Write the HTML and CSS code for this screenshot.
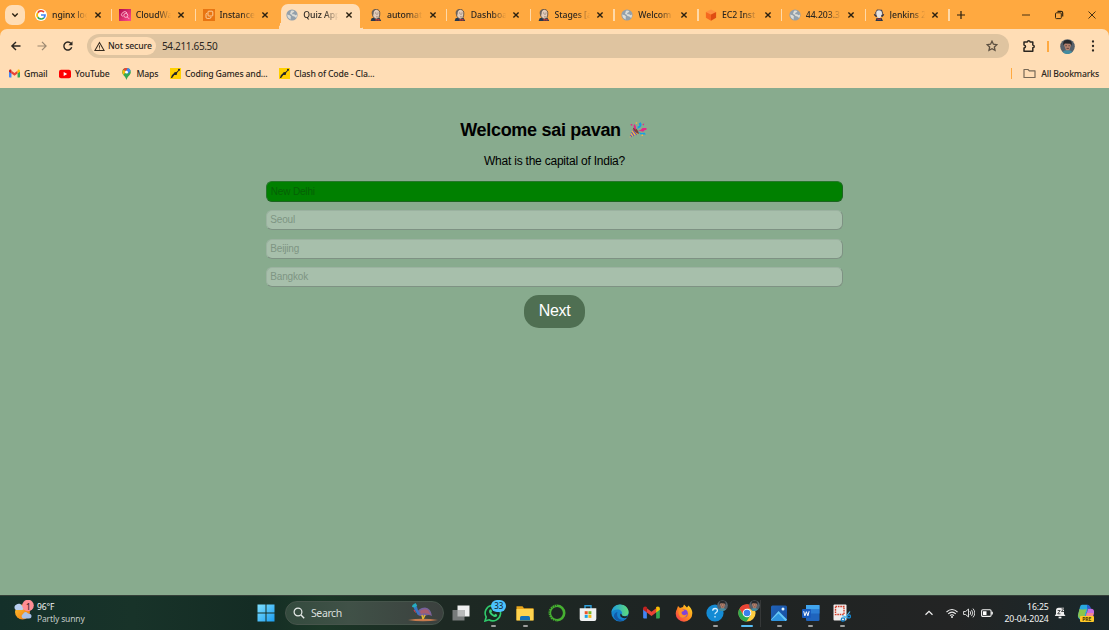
FILE: index.html
```html
<!DOCTYPE html>
<html lang="en">
<head>
<meta charset="utf-8">
<title>Quiz App</title>
<link rel="stylesheet" href="styles.css">
</head>
<body>
<svg class="defs" aria-hidden="true">
  <defs>
    <linearGradient id="gWin" x1="0" y1="0" x2="1" y2="1"><stop offset="0" stop-color="#7fe0ff"/><stop offset="1" stop-color="#1b9df0"/></linearGradient>
    <linearGradient id="gPink" x1="0" y1="0" x2="1" y2="1"><stop offset="0" stop-color="#b0084d"/><stop offset="1" stop-color="#ff4f8b"/></linearGradient>
    <linearGradient id="gEdge" x1="0" y1="0" x2="1" y2="0"><stop offset="0" stop-color="#1e9de0"/><stop offset="1" stop-color="#5fdc78"/></linearGradient>
    <linearGradient id="gSun" x1="0" y1="0" x2="1" y2="1"><stop offset="0" stop-color="#ffc22e"/><stop offset="1" stop-color="#ed7410"/></linearGradient>
    <linearGradient id="gPhoto" x1="0" y1="0" x2="1" y2="1"><stop offset="0" stop-color="#2062b8"/><stop offset="1" stop-color="#174f9f"/></linearGradient>
    <linearGradient id="gFox" x1="1" y1="0" x2="0" y2="1"><stop offset="0" stop-color="#ffe226"/><stop offset=".5" stop-color="#ff8a1c"/><stop offset="1" stop-color="#f5295c"/></linearGradient>
  </defs>
  <symbol id="x" viewBox="0 0 8 8"><path d="M1.400 1.400l5.200 5.200M6.600 1.400L1.400 6.600" stroke="#2a2010" stroke-width="1.400"/></symbol>
  <symbol id="google" viewBox="0 0 12 12"><circle cx="6" cy="6" r="6" fill="#fff"/><g fill="none" stroke-width="1.700"><path d="M2.800 3.700A4 4 0 0 1 9 3.200" stroke="#ea4335"/><path d="M2.800 8.300a4 4 0 0 1 0-4.600" stroke="#fbbc05"/><path d="M8.800 8.900a4 4 0 0 1-6-.6" stroke="#34a853"/><path d="M6 6h4a4 4 0 0 1-1.200 2.900" stroke="#4285f4"/></g></symbol>
  <symbol id="cloudwatch" viewBox="0 0 12 12"><path fill="url(#gPink)" d="M0 0h12v12H0z"/><g fill="none" stroke="#ffc0d6" stroke-width=".9"><path d="M4 7H3.200a1.500 1.500 0 0 1 .3-2.800A2.400 2.400 0 0 1 8 4.200"/><circle cx="6.800" cy="6.400" r="2"/><path d="M8.200 7.900l2 2"/></g></symbol>
  <symbol id="instance" viewBox="0 0 12 12"><path fill="#e87512" d="M0 0h12v12H0z"/><g fill="none" stroke="#ffd8a8" stroke-width=".9"><rect x="5" y="2.200" width="4.800" height="4.800" rx=".8"/><path d="M4.200 4.200q-1.200 0-1.200 1.200v2.800q0 1.200 1.200 1.200h2.500Q8 9.400 8 8"/></g></symbol>
  <symbol id="globe" viewBox="0 0 12 12"><circle cx="6" cy="6" r="5.600" fill="#93a0ab"/><path d="M5 1.800q2-.8 3.400.4L7.300 3.600 6.100 4l.3 1.200 1.700.1 1.500 1L11 5.500q.2 2-.9 3.600L8.400 7.600 6.500 7 5.400 5.500 4 5zM1.200 5.600l2.500.7 1.400 1.400-.6 1.200.5 1.700Q1.300 9.500 1.200 5.600z" fill="#dcdcd6"/></symbol>
  <symbol id="jenkins" viewBox="0 0 12 12"><path d="M.6 12l1-2.800 3-.8 5 .5 1.600 3.100z" fill="#26394d"/><path d="M2.200 4C2 1.500 4 .3 6.500.4 9 .6 10 2.500 9.800 5c-.1 2.800-1 5-3.200 5C4.500 10 3 8.200 2.500 6z" fill="#e2ccba" stroke="#4d443d" stroke-width=".8"/><path d="M2 4.800C1.500 1.500 4 .1 6.500.3 4 1.500 3.600 3 3.600 5L3 6.400z" fill="#6b625b"/><path d="M5 4h1.200M7.500 4h1.100M6 7.600c1 .6 1.800.4 2.300-.1M7 4.500v1.500" stroke="#6b584d" stroke-width=".6" fill="none"/><path d="M5.500 9.800l2 .8 2-.8v2l-2-.6-2 .6z" fill="#d33833"/></symbol>
  <symbol id="jenkinsw" viewBox="0 0 12 12"><path d="M2.500 12l1-3 5 .1L10 12z" fill="#27384c"/><path d="M2 4L4 .6 9 .7 10 4 8.500 7H4z" fill="#445"/><path d="M3.200 4c0-2 1-2.800 2.800-2.800S9 2.300 9 4.200 8 9 6 9 3.200 6.500 3.200 4z" fill="#e3e2e2"/><path d="M1.300 5.300l2.400 2.400M10.700 5.300L8.500 7.600" stroke="#334" stroke-width="1.600"/><path d="M4.500 8.900l1.500 1 1.700-1v2.400L6 10.500l-1.500.8z" fill="#c53932"/></symbol>
  <symbol id="cube" viewBox="0 0 12 12"><path d="M6 .5L11 3 6 5.400 1 3z" fill="#ff9142"/><path d="M.9 3L6 5.400v6.300L.9 8.800z" fill="#f56920"/><path d="M11.100 3L6 5.400v6.300l5.100-2.900z" fill="#df4c12"/></symbol>
  <symbol id="gmail" viewBox="0 0 18 14"><path d="M0 2.500V12.500q0 1 1 1H4V6z" fill="#4285f4"/><path d="M18 2.500V12.500q0 1-1 1H14V6z" fill="#34a853"/><path d="M4 2.500l5 3.800 5-3.800V7L9 10.800 4 7z" fill="#ea4335"/><path d="M0 3C0 .5 2.300-.1 4 1.200V7L0 4z" fill="#c5221f"/><path d="M18 3c0-2.500-2.300-3.100-4-1.800V7l4-3z" fill="#fbbc04"/></symbol>
  <symbol id="game" viewBox="0 0 12 12"><path d="M0 0h12v12H0z" fill="#ffd000"/><path d="M1 10.800L2 7.800 4 6l1-1.400 2-.2L10 1.700l.7.600L8 5 7.200 7.500 4.700 7.600 2.300 11z" fill="#242626"/><circle cx="9.800" cy="1.800" r="1.100" fill="#242626"/></symbol>
  <symbol id="face" viewBox="0 0 16 16"><circle cx="8" cy="8" r="7.800" fill="#56606a"/><path d="M3 14c1-3 9-3 10 .2A8 8 0 0 1 3 14z" fill="#438ca0"/><path d="M4.500 7Q3.500 2 8 1.600 12.500 2 11.600 7L10 12H6.400z" fill="#b6826e"/><path d="M3.700 7C2.700 1.800 5 1 8.300 1c3.800 0 5 2.500 4 6.200L10.900 5 5.200 4.700z" fill="#26272a"/><path d="M5.700 7.200h1.700M9 7.200h1.500M7 10h2.500" stroke="#41312c" stroke-width=".8"/></symbol>
</svg>

<header class="browser">
  <div class="tabstrip">
    <div class="tabsearch"><svg viewBox="0 0 8 8"><path d="M1.300 2.600L4 5.300l2.700-2.700" fill="none" stroke="#2a2010" stroke-width="1.400"/></svg></div>
    <div class="tab"><svg class="fav"><use href="#google"/></svg><span class="label">nginx log</span><svg class="close"><use href="#x"/></svg></div>
    <div class="tab"><svg class="fav"><use href="#cloudwatch"/></svg><span class="label">CloudWa</span><svg class="close"><use href="#x"/></svg></div>
    <div class="tab nosep"><svg class="fav"><use href="#instance"/></svg><span class="label">Instance</span><svg class="close"><use href="#x"/></svg></div>
    <div class="tab active"><svg class="fav"><use href="#globe"/></svg><span class="label">Quiz App</span><svg class="close"><use href="#x"/></svg></div>
    <div class="tab"><svg class="fav"><use href="#jenkins"/></svg><span class="label">automat</span><svg class="close"><use href="#x"/></svg></div>
    <div class="tab"><svg class="fav"><use href="#jenkins"/></svg><span class="label">Dashboa</span><svg class="close"><use href="#x"/></svg></div>
    <div class="tab"><svg class="fav"><use href="#jenkins"/></svg><span class="label">Stages [a</span><svg class="close"><use href="#x"/></svg></div>
    <div class="tab"><svg class="fav"><use href="#globe"/></svg><span class="label">Welcom</span><svg class="close"><use href="#x"/></svg></div>
    <div class="tab"><svg class="fav"><use href="#cube"/></svg><span class="label">EC2 Inst</span><svg class="close"><use href="#x"/></svg></div>
    <div class="tab"><svg class="fav"><use href="#globe"/></svg><span class="label">44.203.3</span><svg class="close"><use href="#x"/></svg></div>
    <div class="tab"><svg class="fav"><use href="#jenkinsw"/></svg><span class="label">Jenkins 2</span><svg class="close"><use href="#x"/></svg></div>
    <svg class="plus" viewBox="0 0 10 10"><path d="M5 1v8M1 5h8" stroke="#2a2010" stroke-width="1.200"/></svg>
    <div class="winctl">
      <svg viewBox="0 0 10 10"><path d="M1 5h8" stroke="#33250f" stroke-width=".9"/></svg>
      <svg viewBox="0 0 10 10"><g fill="none" stroke="#33250f"><rect x="1.500" y="2.800" width="5.800" height="5.800" rx="1"/><path d="M3.500 1.400h3.600q1.600 0 1.600 1.600v3.600" stroke-width="1.200"/></g></svg>
      <svg viewBox="0 0 10 10"><path d="M1.500 1.500l7 7M8.500 1.500l-7 7" stroke="#33250f" stroke-width=".9"/></svg>
    </div>
  </div>

  <div class="toolbar">
    <svg class="nav" viewBox="0 0 12 12"><path d="M10.500 6H2M6 1.900L1.900 6 6 10.100" fill="none" stroke="#2b2620" stroke-width="1.400"/></svg>
    <svg class="nav" viewBox="0 0 12 12"><path d="M1.500 6H10M6 1.900L10.100 6 6 10.100" fill="none" stroke="#9b8870" stroke-width="1.200"/></svg>
    <svg class="nav" viewBox="0 0 12 12"><path d="M9.700 7.300A4 4 0 1 1 9 3.500" fill="none" stroke="#2b2620" stroke-width="1.400"/><path d="M10.500 1.300v4h-4z" fill="#2b2620"/></svg>
    <div class="omnibox">
      <span class="secure"><svg viewBox="0 0 12 12"><path d="M6 1.700L11 10.300H1z" fill="none" stroke="#33291e" stroke-width="1.100"/><path d="M6 4.800v2.600M6 8.200v1" stroke="#33291e"/></svg><span>Not secure</span></span>
      <span class="url">54.211.65.50</span>
      <svg class="star" viewBox="0 0 12 12"><path d="M6 1.200l1.450 3.050 3.350.4-2.450 2.300.65 3.300L6 8.650l-3 1.600.65-3.300L1.200 4.650l3.350-.4z" fill="none" stroke="#5d5041" stroke-width="1.300"/></svg>
    </div>
    <svg class="puzzle" viewBox="0 0 14 14"><path d="M2 3h3.300q.2-1.200 1.400-1.200T8.100 3h2.700v3q1.400.2 1.400 1.400t-1.400 1.400v3.400H2V9.100Q3.500 8.800 3.500 7.500T2 6z" fill="none" stroke="#2b2620" stroke-width="1.500" stroke-linejoin="round"/></svg>
    <span class="vbar"></span>
    <svg class="avatar"><use href="#face"/></svg>
    <svg class="dots" viewBox="0 0 4 12"><g fill="#2b2620"><circle cx="2" cy="1.500" r="1.150"/><circle cx="2" cy="6" r="1.150"/><circle cx="2" cy="10.500" r="1.150"/></g></svg>
  </div>

  <nav class="bookmarks">
    <a class="bm gm"><svg><use href="#gmail"/></svg><span>Gmail</span></a>
    <a class="bm yt"><svg viewBox="0 0 12 10"><rect y=".7" width="12" height="8.600" rx="2" fill="#f00"/><path d="M4.700 3v4l3.500-2z" fill="#fff"/></svg><span>YouTube</span></a>
    <a class="bm mp"><svg viewBox="0 0 9 12"><path d="M4.500 0A4.300 4.300 0 0 0 .2 4.200C.2 7 3.500 8 4.500 12c1-4 4.300-5 4.300-7.800A4.300 4.300 0 0 0 4.500 0z" fill="#34a853"/><path d="M.9 2A4.300 4.300 0 0 1 5.800.1L4 3z" fill="#ea4335"/><path d="M5.800.1a4.300 4.300 0 0 1 2.800 2.700L5.800 6 4 3z" fill="#4285f4"/><path d="M.9 2L4 3 1.600 7A5 5 0 0 1 .9 2z" fill="#fbbc04"/><circle cx="4.500" cy="4.200" r="1.400" fill="#fff"/></svg><span>Maps</span></a>
    <a class="bm cg"><svg><use href="#game"/></svg><span>Coding Games and...</span></a>
    <a class="bm cc"><svg><use href="#game"/></svg><span>Clash of Code - Cla...</span></a>
    <span class="vbar end"></span>
    <a class="bm all"><svg viewBox="0 0 13 11"><path d="M1 1.500h4l1.300 1.300H12v6.700H1z" fill="none" stroke="#776957" stroke-width="1.200" stroke-linejoin="round"/></svg><span>All Bookmarks</span></a>
  </nav>
</header>

<main class="quiz">
  <h1><span>Welcome sai pavan</span>
    <svg viewBox="0 0 18 16"><path d="M.5 15.500L4 6.500l6 5z" fill="#f4b942"/><path d="M2.500 10l2.500 4M3.600 7.500l4 5.300M1.400 12.800l1.300 2" stroke="#6257ba" stroke-width="1.200"/><path d="M4 6q2-1 4 1.500t2 4.500Q8 12 5.800 9.600T4 6z" fill="#7a4038"/><path d="M6.500 8Q3.500 5 5.300 2q2.200 2 1.700 4.500z" fill="#e52886"/><path d="M8 7q1-1 .7-3 2.600 1 1-2.500l2-1.200q2 3-.6 5.200z" fill="#159fe4"/><path d="M9 8.400q3.500 0 4.500-2.400l4 .1v1.600q-3 .6-3.300 2z" fill="#e52886"/><path d="M8.800 9.500l3.300 1.500 3.700-.3 1 1.700h-5z" fill="#159fe4"/><path d="M1.700 2h1.600v1.600H1.700z" fill="#e52886"/><path d="M6.700.2h1.500v1.500H6.700zM12.500 12.400H14v1.500h-1.500z" fill="#f4b942"/><path d="M13.200 2.200l2-.8-.4 2z" fill="#e52886"/></svg>
  </h1>
  <p class="question">What is the capital of India?</p>
  <div class="option correct">New Delhi</div>
  <div class="option">Seoul</div>
  <div class="option">Beijing</div>
  <div class="option">Bangkok</div>
  <div class="next">Next</div>
</main>

<footer class="taskbar">
  <div class="weather">
    <svg viewBox="0 0 22 22"><circle cx="9.500" cy="12" r="7.500" fill="url(#gSun)"/><path d="M3 10a3 3 0 0 1 .5-5.500A3.500 3.500 0 0 1 9 6q2 0 2 2t-2 2z" fill="#b9d0f1"/><path d="M10 18.500a2.500 2.500 0 0 1 0-4.500q2-3.500 5-.5 3.500 0 3.500 2.500t-2.500 2.500z" fill="#a9c1e9"/><circle cx="15" cy="5.500" r="5.800" fill="#ff8d95"/></svg>
    <b>1</b>
    <div><span>96°F</span><span class="dim">Partly sunny</span></div>
  </div>
  <svg class="start" viewBox="0 0 18 18"><path d="M.5.500h8v8h-8zM9.500.500h8v8h-8zM.5 9.500h8v8h-8zM9.500 9.500h8v8h-8z" fill="url(#gWin)"/></svg>
  <div class="search">
    <svg class="mag" viewBox="0 0 12 12"><circle cx="5" cy="5" r="3.900" fill="none" stroke="#e7ebe9" stroke-width="1.200"/><path d="M8 8l3.200 3.200" stroke="#e7ebe9" stroke-width="1.400"/></svg>
    <span>Search</span>
    <svg class="bird" viewBox="0 0 30 19"><path d="M0 17Q14 14.500 30 17q-15 2.500-30 0z" fill="#c67b4e"/><path d="M9 10q1-5 8-5.500Q23 5 24 13q-4-2-7 0-7 1-8-3z" fill="#75619b"/><path d="M12 8q4-3 8-1l3 5q-5-3-10-1z" fill="#a65d70"/><path d="M5 3q3-2 4 1 1 5 3 7l-2 1Q6 7 5 3z" fill="#3976c5"/><path d="M4.500 2l3-2 1.700 2.500-2 2L4 4z" fill="#25adc2"/><path d="M6 7l1.500 2.500" stroke="#e33b50"/><path d="M14 12l1 4M17 12l-2 4" stroke="#e1b532" stroke-width="1.500"/></svg>
  </div>
  <div class="apps">
    <div class="app"><svg viewBox="0 0 18 18"><path d="M5.500 1.500h12v11h-12z" fill="#f0f1f1"/><path d="M.5 6h12v10.500H.5z" fill="#777b7b"/><path d="M5.500 6h7v6.500h-7z" fill="#b8baba"/></svg></div>
    <div class="app run"><svg viewBox="0 0 18 18"><path d="M1 17l1.200-4A7.700 7.700 0 1 1 5 15.800z" fill="#182a21" stroke="#30c96b" stroke-width="1.600"/><path d="M5.700 5.400l1.500-.2.900 2-.8 1.100q1 1.800 2.900 2.600l1-1.100 2 .9-.2 1.600q-1.300 1.300-3.200.5-3-1-4.500-4-.7-2.100.4-3.400z" fill="#36d176"/></svg><b class="count">33</b></div>
    <div class="app run"><svg viewBox="0 0 18 18"><path d="M.5 2.300h6l1.500 2h9.500v12H.5z" fill="#e8a51b"/><path d="M.5 5h17v11.500H.5z" fill="#ffd34e"/><path d="M4 16.500v-3q0-1.500 1.500-1.500h7q1.500 0 1.500 1.500v3z" fill="#1570b7"/></svg></div>
    <div class="app"><svg viewBox="0 0 18 18"><circle cx="9" cy="9" r="7.200" fill="none" stroke="#46b031" stroke-width="2.600"/><path d="M9 1.200A7.800 7.800 0 0 0 9 16.800" fill="none" stroke="#1d2b20" stroke-width="1.200" stroke-dasharray=".8 1.600"/></svg></div>
    <div class="app"><svg viewBox="0 0 18 18"><path d="M6 5V1.700h6V5" fill="none" stroke="#2f9fdb" stroke-width="1.400"/><path d="M.7 4.300h16.600V15q0 2-2 2H2.700q-2 0-2-2z" fill="#f0f2f2"/><path d="M5.700 7.200h3v3h-3z" fill="#ef5427"/><path d="M9.400 7.200h3v3h-3z" fill="#78b624"/><path d="M5.700 10.900h3v3h-3z" fill="#18a5e6"/><path d="M9.400 10.900h3v3h-3z" fill="#f6b519"/></svg></div>
    <div class="app"><svg viewBox="0 0 18 18"><circle cx="9" cy="9" r="8.600" fill="#1583cf"/><path d="M.5 8.500C1 3.500 4.500.4 9 .4c5 0 8.600 3.500 8.600 7.600 0 3-2.600 4.300-4.700 4.300-2.400 0-2.900-.8-2.100-2 1-2-.7-4.800-4.200-4.800-3 0-5 1.300-6.100 3z" fill="url(#gEdge)"/><path d="M6.500 8c-1.800 5 2 9 8 7.300C9 19 3.500 16 3 12.500 2.800 10.500 4 8.500 6.500 8z" fill="#135aa9"/><path d="M10.700 10.500q.2 1.700 2.600 1.800 2 0 3.500-.9l-.6 2.200Q12 15 9.700 12.700 8.700 11 9.500 9.500z" fill="#1c2528"/></svg></div>
    <div class="app"><svg class="gmicon"><use href="#gmail"/></svg></div>
    <div class="app"><svg viewBox="0 0 18 18"><path d="M2 5l1-3 2 2 3-1 1-2.500 3 3 1.500-2q4 4 3.800 8A8.300 8.300 0 0 1 .7 9.500Q.700 7 2 5z" fill="url(#gFox)"/><circle cx="8.800" cy="9.500" r="4" fill="#8144d6"/><path d="M3.500 5.500q4-1.300 6 1.300l-2.700 1Q6 10 8.500 11q2 .5 3.500-1-1 4-4.500 3.800Q2.800 13 3.500 5.500z" fill="#ff8f25"/></svg></div>
    <div class="app run"><svg viewBox="0 0 18 18"><circle cx="9" cy="9" r="8.600" fill="#148bd4"/><path d="M6.700 6.800q0-2.300 2.400-2.300t2.300 2.100q0 1.200-1.200 1.900T9 10.300M9 12v1.500" fill="none" stroke="#d3efff" stroke-width="1.300"/></svg><svg class="mini"><use href="#face"/></svg></div>
    <div class="app run current"><svg viewBox="0 0 18 18"><circle cx="9" cy="9" r="8.600" fill="#ffcd40"/><path d="M1.500 4.700A8.600 8.600 0 0 1 16.500 4.700H9L5.500 11.300z" fill="#ea4335"/><path d="M1.500 4.700A8.600 8.600 0 0 0 8.500 17.600L12.700 11l-7.300.2z" fill="#2eaa51"/><circle cx="9" cy="9" r="4.300" fill="#fff"/><circle cx="9" cy="9" r="3.300" fill="#3980ed"/></svg><svg class="mini"><use href="#face"/></svg></div>
    <div class="app run"><svg viewBox="0 0 18 18"><rect x="1" y="1.500" width="16" height="15.500" rx="1.500" fill="url(#gPhoto)"/><path d="M1 15.500L8.500 7 17 15.500 16 17H2z" fill="#66c8f5"/><path d="M1.500 16L8.500 9.500 15.500 17H2z" fill="#2e94df"/><circle cx="13" cy="5" r="1.500" fill="#e6f8ff"/></svg></div>
    <div class="app run"><svg viewBox="0 0 18 18"><rect x="4" y="1" width="13.500" height="16" rx="1.300" fill="#1f64bd"/><path d="M4 1h13.500v4.500H4z" fill="#41a5ee"/><path d="M4 5.500h13.500v4H4z" fill="#2b7cd3"/><rect x="0" y="5" width="9" height="9" rx="1" fill="#185abd"/><path d="M1.700 7.200l1.200 4.600 1.500-4.100 1.500 4.100 1.200-4.600" fill="none" stroke="#fff" stroke-width="1"/></svg></div>
    <div class="app run"><svg viewBox="0 0 18 18"><rect x=".5" y=".5" width="13" height="16" rx="1" fill="#f1eded"/><rect x="2.500" y="2.500" width="8.500" height="8" fill="none" stroke="#d23d28" stroke-width="1.400" stroke-dasharray="1.600 .8"/><path d="M9 11.500l6 2.500M17 7.500L11 15" stroke="#51b9ee" stroke-width="1.200"/><circle cx="10" cy="15.500" r="1.700" fill="none" stroke="#1784cd" stroke-width="1.300"/><circle cx="16" cy="12.500" r="1.500" fill="none" stroke="#1784cd" stroke-width="1.300"/></svg></div>
  </div>
  <svg class="chev" viewBox="0 0 10 10"><path d="M1.500 6.700L5 3.300l3.500 3.400" fill="none" stroke="#f1f1f1" stroke-width="1.200"/></svg>
  <div class="tray">
    <svg viewBox="0 0 12 12"><g fill="none" stroke="#eee" stroke-width="1.100"><path d="M.5 5q5.500-5 11 0M2.200 6.900q3.800-3.500 7.600 0M4 8.700q2-1.900 4 0"/></g><circle cx="6" cy="10" r="1" fill="#eee"/></svg>
    <svg viewBox="0 0 12 12"><g fill="none" stroke="#eee" stroke-width=".9"><path d="M.6 4.500h2L5.500 2v8L2.600 7.500h-2zM7 4.200q1.500 1.800 0 3.600M8.500 2.900q2.700 3.100 0 6.200M10 1.600q3.700 4.400 0 8.800"/></g></svg>
    <svg viewBox="0 0 12 12"><rect x=".6" y="2.800" width="9.500" height="6.600" rx="1.200" fill="none" stroke="#f3f3f3" stroke-width="1.100"/><path d="M2 4.200h3.500v3.900H2zM10.400 4.800h1.400v2.600h-1.400z" fill="#fff"/></svg>
  </div>
  <div class="clock"><span>16:25</span><span>20-04-2024</span></div>
  <svg class="bell" viewBox="0 0 12 12"><path d="M2 3.500Q2 .8 4.500.8H10V7l1.500 2H.8L2 7z" fill="#eee"/><path d="M4.600 10.500h2.800" stroke="#eee" stroke-width="1.700"/><path d="M3.700 3.500h2.500L3.700 6.800h2.700M7.500 1.800h2.300L7.500 4.500H10" fill="none" stroke="#252727" stroke-width=".8"/></svg>
  <div class="copilot"><svg viewBox="0 0 18 18"><path d="M5 .8h5q2 0 1.500 2L8.500 13q-.8 3-3.500 3-3.500 0-4.200-4L3 3Q3.500.8 5 .8z" fill="#29a9df"/><path d="M1 11l1.500-6q3 1 7 0l-2 7q-1 3.500-3.500 3Q1 14.500 1 11z" fill="#8cc44c"/><path d="M10 .8q3 0 4 4h-4z" fill="#285fd0"/><path d="M11 4.800h3q3.500 0 3 4L15.500 15H8z" fill="#c56de1"/><path d="M9.800 9h6.900l-1.500 6H8z" fill="#f48791"/></svg><b>PRE</b></div>
</footer>
</body>
</html>
```
FILE: styles.css
```css
* { box-sizing: border-box; }
body {
  margin: 0;
  width: 1109px;
  height: 630px;
  display: flex;
  flex-direction: column;
  overflow: hidden;
  background: #88ab8e;
  font-family: "Noto Sans", sans-serif;
  font-size: 8.7px;
  color: #2b2620;
}
svg { display: block; flex: none; }
.defs { position: absolute; width: 0; height: 0; }
.browser { height: 88px; flex: none; background: #ffa940; font-weight: 500; }

.tabstrip { height: 29px; display: flex; align-items: center; }
.tabsearch {
  width: 20px; height: 20px; margin: 0 2.500px 0 5px; flex: none;
  border-radius: 7px; background: #ffddb5;
  display: flex; align-items: center; justify-content: center;
}
.tabsearch svg { width: 8px; height: 8px; }
.tab {
  position: relative; width: 83.750px; height: 25px; flex: none; align-self: flex-end;
  display: flex; align-items: center; padding: 0 0 4px 7.500px;
}
.tab::after {
  content: ""; position: absolute; right: -1px; top: 5px;
  width: 1.500px; height: 12px; background: #ffd9a8;
}
.tab.nosep::after, .tab.active::after { display: none; }
.fav { width: 12px; height: 12px; }
.label {
  width: 38px; margin-left: 5px; margin-top: 1px; white-space: nowrap; letter-spacing: -.05px;
  -webkit-mask-image: linear-gradient(90deg, #000 55%, transparent 93%);
  mask-image: linear-gradient(90deg, #000 55%, transparent 93%);
}
.close { width: 8px; height: 8px; margin: 0 0 0 3.500px; }
.tab.active::before {
  content: ""; position: absolute; z-index: 0; left: 2.500px; right: 2.500px; top: 0; bottom: 0;
  border-radius: 7px 7px 0 0; background: #ffddb5;
}
.tab.active > * { position: relative; z-index: 1; }
.tab.active {
  background:
    radial-gradient(circle at 0 0, transparent 5px, #ffddb5 5.500px) right -3px bottom 0 / 6px 6px no-repeat,
    radial-gradient(circle at 0 0, transparent 5px, #ffddb5 5.500px) left -4px bottom 0 / 6px 6px no-repeat;
}
.plus { width: 10px; height: 10px; margin-left: 7px; }
.winctl { display: flex; gap: 23px; margin-left: auto; margin-right: 12px; }
.winctl svg { width: 10px; height: 10px; }

.toolbar {
  height: 34px; display: flex; align-items: center;
  background: #ffddb5; border-radius: 7px 7px 0 0;
}
.nav { width: 12px; height: 12px; margin-left: 14px; }
.nav:first-child { margin-left: 10px; }
.omnibox {
  width: 922px; height: 24px; margin-left: 13px; border-radius: 12px;
  background: #dfc4a0; display: flex; align-items: center; padding-left: 4px;
}
.secure {
  height: 18px; width: 65px; border-radius: 9px; background: #ffddb5;
  display: flex; align-items: center; gap: 3px; padding-left: 3px; white-space: nowrap;
}
.secure svg { width: 11px; height: 11px; }
.secure span { letter-spacing: -.12px; }
.url { margin-left: 6px; font-size: 10px; letter-spacing: -.35px; font-weight: 400; }
.star { width: 12px; height: 12px; margin-left: auto; margin-right: 11px; }
.puzzle { width: 14px; height: 14px; margin-left: 13px; }
.vbar { width: 1.500px; height: 11px; margin-left: 11px; background: #ffa940; }
.avatar { width: 15px; height: 15px; margin-left: 11px; }
.dots { width: 4px; height: 12px; margin-left: 16px; }

.bookmarks {
  height: 25px; background: #ffddb5; display: flex; align-items: center;
  padding: 0 10px 4px 9px;
}
.bm { display: flex; align-items: center; white-space: nowrap; }
.bm span { letter-spacing: -.16px; }
.gm { width: 50px; gap: 4px; } .gm svg { width: 11px; height: 9px; }
.yt { width: 63px; gap: 4px; } .yt svg { width: 12px; height: 10px; }
.mp { width: 48px; gap: 5.500px; } .mp svg { width: 9px; height: 12px; }
.cg { width: 109px; gap: 4px; } .cg svg, .cc svg { width: 11px; height: 11px; }
.cc { gap: 4px; }
.vbar.end { margin-left: auto; }
.all { gap: 5px; margin-left: 11px; } .all svg { width: 13px; height: 11px; }

.quiz {
  flex: 1; display: flex; flex-direction: column; align-items: center;
  font-family: "Liberation Sans", Arial, sans-serif; color: #000;
}
.quiz h1 {
  margin: 31px 2px 0 0; height: 22px; display: flex; align-items: center; gap: 8px;
  font-size: 18px; line-height: 22px; letter-spacing: -.3px; white-space: nowrap;
}
.quiz h1 svg { width: 18px; height: 16px; }
.question { margin: 13px 0 0; font-size: 12px; line-height: 15px; letter-spacing: -.22px; }
.option {
  width: 576.500px; height: 20px; margin-top: 8.500px; padding-left: 3px;
  border: 1px solid; border-color: #9bb2a0 #7e9283 #7e9283 #9bb2a0; border-radius: 6px;
  background: #a7bfab; color: #7e9583; font-size: 10px; letter-spacing: -.16px; line-height: 18px;
}
.option.correct {
  width: 577.500px; height: 21px; margin-top: 12px; padding-left: 4px; line-height: 19px;
  background: #008000; border-color: #25762a #1b6420 #1b6420 #25762a; color: #056005;
}
.option.correct + .option { margin-top: 8px; }
.next {
  width: 60.500px; height: 33px; margin-top: 8px; border-radius: 15px;
  background: #4f6f52; color: #fff; font-size: 16px; letter-spacing: -.35px; line-height: 32px; text-align: center;
}

.taskbar {
  height: 35px; flex: none; display: flex; align-items: center; color: #f4f5f5;
  border-top: 1px solid #344039; padding-bottom: 1px;
  background: linear-gradient(90deg, #14302a 0, #183329 12%, #142c24 23%, #1b3727 29%, #1d2923 40%, #1e2423 60%, #232424 86%, #19272a 100%);
}
.weather { position: relative; width: 244px; padding-left: 13px; display: flex; align-items: center; margin-right: 1px; }
.weather svg { width: 22px; height: 22px; margin-top: -3px; }
.weather b { position: absolute; left: 26px; top: 0; font-size: 8px; line-height: 11px; color: #402327; font-weight: 500; }
.weather div { display: flex; flex-direction: column; margin-left: 2px; line-height: 12px; font-size: 8.500px; letter-spacing: -.15px; }
.dim { color: #c3cbc8; }
.start { width: 18px; height: 18px; margin-left: 12px; }
.search {
  width: 159px; height: 24px; margin-left: 10px; border-radius: 12px; padding: 0 5px 0 7px;
  display: flex; align-items: center; font-size: 10.500px; letter-spacing: -.4px; color: #d9dfdc;
  background: linear-gradient(90deg, #344b3e, #405147 40%, #3b403e);
  border: 1px solid #46544b;
}
.mag { width: 12px; height: 12px; margin-right: 6px; }
.bird { width: 30px; height: 19px; margin-left: auto; }
.apps { display: flex; margin-left: 1.500px; }
.app { position: relative; width: 31.750px; height: 34px; display: flex; align-items: center; justify-content: center; }
.app > svg { width: 18px; height: 18px; }
.app .gmicon { width: 17px; height: 13px; }
.app.run::after {
  content: ""; position: absolute; left: 13.500px; bottom: 3px;
  width: 5px; height: 2px; border-radius: 1px; background: #9c9e9e;
}
.app.current::after { left: 10px; width: 12px; background: #58bdf5; }
.app.current::before { content: ""; position: absolute; right: 2px; top: 4px; width: 1px; height: 27px; background: #353838; }
.count {
  position: absolute; left: 14px; top: 4px; width: 15px; height: 12px; border-radius: 6px;
  background: #4cc2ff; color: #153345; font-size: 8px; line-height: 12px; font-weight: 500; text-align: center;
}
.app > .mini { position: absolute; width: 11px; height: 11px; right: 3px; top: 4px; }
.chev { width: 10px; height: 10px; margin-left: 65.500px; }
.tray { display: flex; gap: 5.500px; margin-left: 12px; }
.tray svg { width: 12px; height: 12px; }
.clock { display: flex; flex-direction: column; align-items: flex-end; width: 56px; line-height: 12px; font-size: 8.700px; letter-spacing: -.1px; white-space: nowrap; }
.bell { width: 12px; height: 12px; margin-left: 5px; }
.copilot { position: relative; margin-left: 11px; }
.copilot svg { width: 18px; height: 18px; }
.copilot b { position: absolute; left: 3px; bottom: 0; width: 14px; height: 6px; border-radius: 1px; background: #ffc928; color: #493600; font-size: 5px; line-height: 6px; text-align: center; }
```
